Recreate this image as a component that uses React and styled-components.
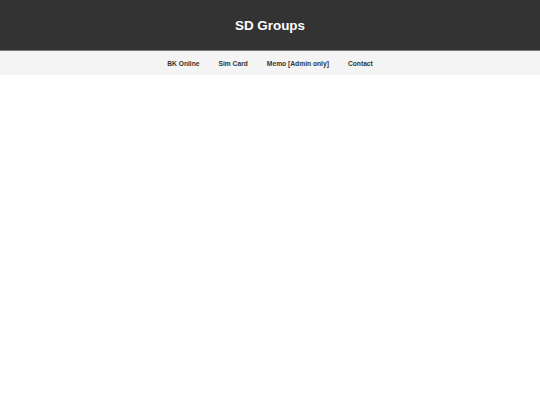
import React from 'react'
import styled, { createGlobalStyle } from 'styled-components'

const GlobalStyle = createGlobalStyle`
  html, body {
    margin: 0;
    padding: 0;
    background: #fff;
    font-family: "Liberation Sans", Arial, sans-serif;
  }
`

const Header = styled.header`
  height: 50px;
  background: #333;
  border-bottom: 1px solid #777;
  display: flex;
  align-items: center;
  justify-content: center;

  h1 {
    margin: 0;
    color: #fff;
    font-size: 13.4px;
    font-weight: bold;
  }
`

const Nav = styled.nav`
  height: 24px;
  background: #f4f4f4;
  display: flex;
  justify-content: center;
  align-items: center;
`

const NavLink = styled.a`
  padding: 0 9.5px;
  color: #333;
  font-size: 6.7px;
  font-weight: bold;
  text-decoration: none;
  cursor: pointer;
`

const links = ['BK Online', 'Sim Card', 'Memo [Admin only]', 'Contact']

const App = () => (
  <>
    <GlobalStyle />
    <Header>
      <h1>SD Groups</h1>
    </Header>
    <Nav>
      {links.map(label => (
        <NavLink key={label}>{label}</NavLink>
      ))}
    </Nav>
  </>
)

export default App
